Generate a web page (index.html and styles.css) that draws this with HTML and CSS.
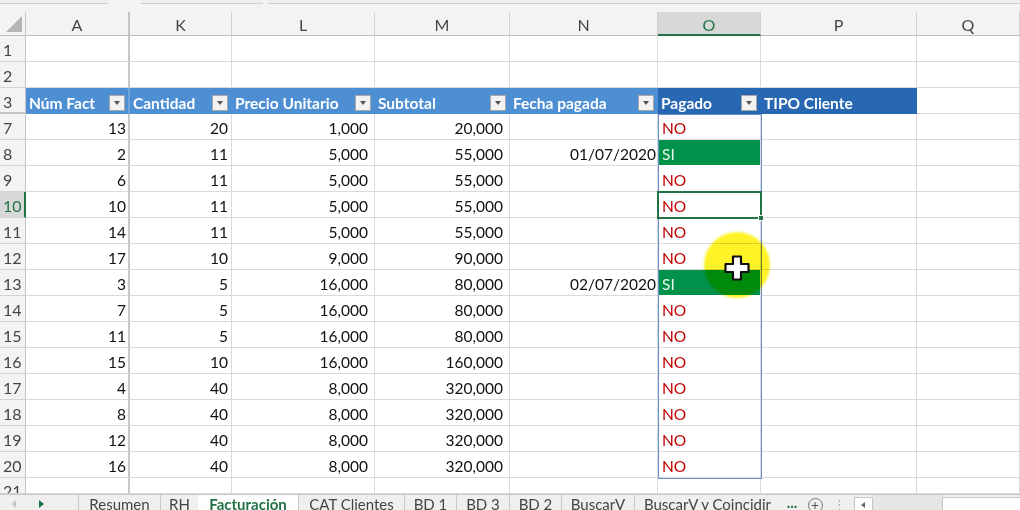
FILE: index.html
```html
<!DOCTYPE html>
<html lang="es">
<head>
<meta charset="utf-8">
<title>Facturación</title>
<link rel="stylesheet" href="styles.css">
</head>
<body>
<div class="app">
  <div class="topstrip">
    <span class="seg s1"></span><span class="seg s2"></span><span class="seg s3"></span>
  </div>
  <div class="sheet">
    <div class="corner"><span class="tri"></span></div>
    <div class="ch a">A</div><div class="ch">K</div><div class="ch">L</div><div class="ch">M</div><div class="ch">N</div><div class="ch sel">O</div><div class="ch">P</div><div class="ch">Q</div>

    <div class="rh">1</div><div class="c a"></div><div class="c"></div><div class="c"></div><div class="c"></div><div class="c"></div><div class="c"></div><div class="c"></div><div class="c"></div>
    <div class="rh">2</div><div class="c a"></div><div class="c"></div><div class="c"></div><div class="c"></div><div class="c"></div><div class="c"></div><div class="c"></div><div class="c"></div>
    <div class="rh hid">3</div>
    <div class="c th a">Núm Fact<span class="fb"></span></div>
    <div class="c th">Cantidad<span class="fb"></span></div>
    <div class="c th">Precio Unitario<span class="fb"></span></div>
    <div class="c th">Subtotal<span class="fb"></span></div>
    <div class="c th">Fecha pagada<span class="fb"></span></div>
    <div class="c th dark">Pagado<span class="fb"></span></div>
    <div class="c th dark">TIPO Cliente</div>
    <div class="c"></div>

    <div class="rh">7</div><div class="c n a">13</div><div class="c n">20</div><div class="c n p6">1,000</div><div class="c n p6">20,000</div><div class="c n d"></div><div class="c no">NO</div><div class="c"></div><div class="c"></div>
    <div class="rh">8</div><div class="c n a">2</div><div class="c n">11</div><div class="c n p6">5,000</div><div class="c n p6">55,000</div><div class="c n d">01/07/2020</div><div class="c si">SI</div><div class="c"></div><div class="c"></div>
    <div class="rh">9</div><div class="c n a">6</div><div class="c n">11</div><div class="c n p6">5,000</div><div class="c n p6">55,000</div><div class="c n d"></div><div class="c no">NO</div><div class="c"></div><div class="c"></div>
    <div class="rh sel">10</div><div class="c n a">10</div><div class="c n">11</div><div class="c n p6">5,000</div><div class="c n p6">55,000</div><div class="c n d"></div><div class="c no">NO</div><div class="c"></div><div class="c"></div>
    <div class="rh">11</div><div class="c n a">14</div><div class="c n">11</div><div class="c n p6">5,000</div><div class="c n p6">55,000</div><div class="c n d"></div><div class="c no">NO</div><div class="c"></div><div class="c"></div>
    <div class="rh">12</div><div class="c n a">17</div><div class="c n">10</div><div class="c n p6">9,000</div><div class="c n p6">90,000</div><div class="c n d"></div><div class="c no">NO</div><div class="c"></div><div class="c"></div>
    <div class="rh">13</div><div class="c n a">3</div><div class="c n">5</div><div class="c n p6">16,000</div><div class="c n p6">80,000</div><div class="c n d">02/07/2020</div><div class="c si">SI</div><div class="c"></div><div class="c"></div>
    <div class="rh">14</div><div class="c n a">7</div><div class="c n">5</div><div class="c n p6">16,000</div><div class="c n p6">80,000</div><div class="c n d"></div><div class="c no">NO</div><div class="c"></div><div class="c"></div>
    <div class="rh">15</div><div class="c n a">11</div><div class="c n">5</div><div class="c n p6">16,000</div><div class="c n p6">80,000</div><div class="c n d"></div><div class="c no">NO</div><div class="c"></div><div class="c"></div>
    <div class="rh">16</div><div class="c n a">15</div><div class="c n">10</div><div class="c n p6">16,000</div><div class="c n p6">160,000</div><div class="c n d"></div><div class="c no">NO</div><div class="c"></div><div class="c"></div>
    <div class="rh">17</div><div class="c n a">4</div><div class="c n">40</div><div class="c n p6">8,000</div><div class="c n p6">320,000</div><div class="c n d"></div><div class="c no">NO</div><div class="c"></div><div class="c"></div>
    <div class="rh">18</div><div class="c n a">8</div><div class="c n">40</div><div class="c n p6">8,000</div><div class="c n p6">320,000</div><div class="c n d"></div><div class="c no">NO</div><div class="c"></div><div class="c"></div>
    <div class="rh">19</div><div class="c n a">12</div><div class="c n">40</div><div class="c n p6">8,000</div><div class="c n p6">320,000</div><div class="c n d"></div><div class="c no">NO</div><div class="c"></div><div class="c"></div>
    <div class="rh">20</div><div class="c n a">16</div><div class="c n">40</div><div class="c n p6">8,000</div><div class="c n p6">320,000</div><div class="c n d"></div><div class="c no">NO</div><div class="c"></div><div class="c"></div>
    <div class="rh last">21</div><div class="c a last"></div><div class="c last"></div><div class="c last"></div><div class="c last"></div><div class="c last"></div><div class="c last"></div><div class="c last"></div><div class="c last"></div>

    <div class="range"></div>
    <div class="active"><span class="handle"></span></div>
    <div class="spot"></div>
    <svg class="cursor" width="28" height="28" viewBox="0 0 28 28">
      <path d="M10 2.5 H18 V10 H25.5 V18 H18 V25.5 H10 V18 H2.5 V10 H10 Z" fill="#ffffff" stroke="#111111" stroke-width="2.2" stroke-linejoin="round"/>
    </svg>
  </div>
  <div class="tabs">
    <div class="nav">
      <span class="arr left"></span>
      <span class="arr right"></span>
    </div>
    <div class="tab w-res">Resumen</div>
    <div class="tab w-rh nosep">RH</div>
    <div class="tab w-fac on">Facturación</div>
    <div class="tab w-cat">CAT Clientes</div>
    <div class="tab w-bd1">BD 1</div>
    <div class="tab w-bd3">BD 3</div>
    <div class="tab w-bd2">BD 2</div>
    <div class="tab w-bv">BuscarV</div>
    <div class="tab w-bvc nosep">BuscarV y Coincidir</div>
    <div class="more">...</div>
    <div class="add"><span class="plus">+</span></div>
    <div class="dots">⋮</div>
    <div class="sbtn"><span class="sarr"></span></div>
    <div class="strack"></div>
    <div class="swhite"></div>
  </div>
</div>
</body>
</html>
```

FILE: styles.css
```css
* { box-sizing: border-box; }
html, body { margin: 0; padding: 0; }
body {
  width: 1020px;
  height: 510px;
  overflow: hidden;
  background: #ffffff;
  font-family: Lato, "Open Sans", sans-serif;
}
.app {
  display: flex;
  flex-direction: column;
  height: 510px;
}
.topstrip {
  height: 12px;
  background: #f3f3f3;
  display: flex;
  align-items: flex-start;
}
.seg {
  height: 4px;
  border-bottom: 1px solid #cfcfcf;
  background: #efefef;
}
.s1 { width: 108px; }
.s2 { width: 122px; margin-left: 33px; }
.s3 { flex: 1; margin-left: 5px; }

.sheet {
  position: relative;
  display: grid;
  grid-template-columns: 26px 104px 102px 143px 135px 148px 103px 156px 103px;
  grid-template-rows: 24px repeat(17, 26px) 16px;
  overflow: hidden;
}
.corner {
  background: #f3f3f3;
  border-right: 1px solid #c6c6c6;
  border-bottom: 1px solid #bdbdbd;
  display: flex;
  align-items: flex-end;
  justify-content: flex-end;
  padding: 0 3px 3px 0;
}
.tri {
  width: 0;
  height: 0;
  border-left: 16px solid transparent;
  border-bottom: 16px solid #b5b5b5;
}
.ch {
  background: #f3f3f3;
  border-right: 1px solid #d2d2d2;
  border-bottom: 1px solid #bdbdbd;
  color: #444444;
  font-size: 16px;
  display: flex;
  align-items: center;
  justify-content: center;
  padding-top: 2px;
}
.ch.a { border-right: 2px solid #c4c4c4; }
.ch.sel {
  background: #d8d8d8;
  color: #217346;
  border-bottom: 2px solid #217346;
}
.rh {
  background: #f3f3f3;
  border-right: 1px solid #c6c6c6;
  border-bottom: 1px solid #d4d4d4;
  color: #444444;
  font-size: 16px;
  display: flex;
  align-items: center;
  padding: 2px 0 0 3px;
  overflow: hidden;
}
.rh.hid { border-bottom: 2px solid #c4c4c4; }
.rh.sel {
  background: #d8d8d8;
  color: #217346;
  border-right: 2px solid #217346;
}
.rh.last { align-items: flex-start; padding-top: 3px; }

.c {
  border-right: 1px solid #dadada;
  border-bottom: 1px solid #dadada;
  font-size: 15.5px;
  color: #111111;
  display: flex;
  align-items: center;
  padding: 2px 4px 0 4px;
  white-space: nowrap;
  overflow: hidden;
}
.c.a { border-right: 2px solid #c8c8c8; }
.c.n { justify-content: flex-end; padding-right: 3px; }
.c.a.n { padding-right: 2px; }
.c.n.p6 { padding-right: 6px; }
.c.n.d { padding-right: 1px; }
.c.no { color: #c00000; }
.c.si {
  background: #00914a;
  color: #e6f7e6;
  border-bottom-color: #ffffff;
}
.c.th {
  background: #4e8fd4;
  color: #ffffff;
  font-weight: 700;
  justify-content: space-between;
  border-right-color: #4e8fd4;
  border-bottom-color: #4e8fd4;
  padding: 5px 3px 0 3px;
}
.c.th.a { border-right: 2px solid #6fa3dc; }
.c.th.dark {
  background: #2868b2;
  border-right-color: #2868b2;
  border-bottom-color: #2868b2;
}
.fb {
  width: 16px;
  height: 16px;
  background: #f2f2f2;
  border: 1px solid #a8a8a8;
  display: flex;
  align-items: center;
  justify-content: center;
}
.fb::after {
  content: "";
  width: 0;
  height: 0;
  border-left: 3.5px solid transparent;
  border-right: 3.5px solid transparent;
  border-top: 4px solid #555555;
}

.range {
  position: absolute;
  left: 658px;
  top: 102px;
  width: 104px;
  height: 365px;
  border: 1px solid #6a8fcf;
  pointer-events: none;
}
.active {
  position: absolute;
  left: 657px;
  top: 179px;
  width: 105px;
  height: 28px;
  border: 2px solid #217346;
}
.handle {
  position: absolute;
  right: -4px;
  bottom: -4px;
  width: 6px;
  height: 6px;
  background: #217346;
  border: 1px solid #ffffff;
}
.spot {
  position: absolute;
  left: 704px;
  top: 220px;
  width: 66px;
  height: 66px;
  border-radius: 50%;
  background: #fff000;
  opacity: 0.85;
  mix-blend-mode: multiply;
  filter: blur(1px);
}
.cursor {
  position: absolute;
  left: 723px;
  top: 242px;
}

.tabs {
  height: 16px;
  display: flex;
  align-items: stretch;
  background: #efefef;
  border-top: 1px solid #c6c6c6;
  font-size: 15px;
  color: #444444;
  overflow: hidden;
}
.nav {
  width: 79px;
  flex: none;
  border-right: 1px solid #c8c8c8;
  position: relative;
}
.arr {
  position: absolute;
  top: 5px;
  width: 0;
  height: 0;
  border-top: 4px solid transparent;
  border-bottom: 4px solid transparent;
}
.arr.left { left: 12px; border-right: 4px solid #c4c4c4; }
.arr.right { left: 39px; border-left: 5px solid #217346; }
.tab {
  flex: none;
  text-align: center;
  line-height: 18px;
  white-space: nowrap;
  border-right: 1px solid #c8c8c8;
}
.tab.nosep { border-right: none; }
.tab.on {
  background: #ffffff;
  color: #217346;
  font-weight: 700;
  border-right: 1px solid #c8c8c8;
}
.w-res { width: 82px; }
.w-rh { width: 37px; }
.w-fac { width: 101px; }
.w-cat { width: 106px; }
.w-bd1 { width: 52px; }
.w-bd3 { width: 53px; }
.w-bd2 { width: 52px; }
.w-bv { width: 73px; }
.w-bvc { width: 145px; }
.more {
  width: 24px;
  flex: none;
  color: #217346;
  font-weight: 700;
  line-height: 14px;
  text-align: center;
}
.add {
  width: 22px;
  flex: none;
  display: flex;
  justify-content: center;
  padding-top: 3px;
}
.plus {
  width: 15px;
  height: 15px;
  border: 1px solid #777777;
  border-radius: 50%;
  font-size: 14px;
  line-height: 12px;
  text-align: center;
  color: #555555;
}
.dots {
  width: 26px;
  flex: none;
  text-align: center;
  color: #b0b0b0;
  line-height: 18px;
  font-size: 13px;
}
.sbtn {
  width: 19px;
  flex: none;
  margin-left: 2px;
  background: #ffffff;
  border: 1px solid #c6c6c6;
  border-bottom: none;
  margin-top: 2px;
  position: relative;
}
.sarr {
  position: absolute;
  left: 6px;
  top: 4px;
  width: 0;
  height: 0;
  border-top: 3.5px solid transparent;
  border-bottom: 3.5px solid transparent;
  border-right: 4px solid #666666;
}
.strack {
  width: 69px;
  flex: none;
  background: #e6e6e6;
}
.swhite {
  flex: 1;
  background: #ffffff;
  border-left: 1px solid #c6c6c6;
  border-top: 1px solid #c6c6c6;
  margin-top: 2px;
}
```
